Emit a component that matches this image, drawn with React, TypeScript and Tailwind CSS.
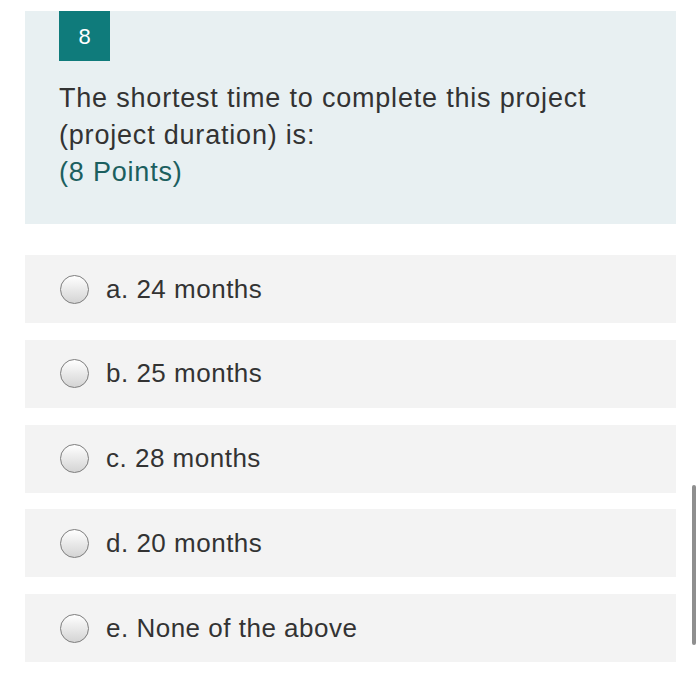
import React from "react";

const options = [
  "a. 24 months",
  "b. 25 months",
  "c. 28 months",
  "d. 20 months",
  "e. None of the above",
];

function Radio() {
  return (
    <span className="h-[29px] w-[29px] shrink-0 rounded-full border-[1.5px] border-[#7d7d7d] bg-gradient-to-b from-white to-[#d4d4d4]" />
  );
}

export default function App() {
  return (
    <div
      className="relative h-[678px] w-[700px] overflow-hidden bg-white pt-[11px] text-[#333333]"
      style={{ fontFamily: '"Liberation Sans", Arial, sans-serif' }}
    >
      <div className="ml-[25px] w-[651px] bg-[#e8f0f2] pb-[33px] pl-[34px] pr-6">
        <div className="flex h-[50px] w-[51px] items-center justify-center bg-[#0f7b7b] text-[22px] text-white">
          8
        </div>
        <div className="mt-[19px] text-[27px] leading-[37px] tracking-[0.8px]">
          <p>The shortest time to complete this project</p>
          <p>(project duration) is:</p>
          <p className="text-[#1b5f5f]">(8 Points)</p>
        </div>
      </div>
      <div className="ml-[25px] mt-[31px] flex w-[651px] flex-col gap-[16.75px]">
        {options.map((option) => (
          <div key={option} className="flex h-[68px] items-center gap-[17px] bg-[#f3f3f3] pl-[35px]">
            <Radio />
            <span className="text-[26px] tracking-[0.5px]">{option}</span>
          </div>
        ))}
      </div>
      <div className="absolute right-[4px] top-[485px] h-[160px] w-[4px] rounded-full bg-[#8f8f8f]" />
    </div>
  );
}
